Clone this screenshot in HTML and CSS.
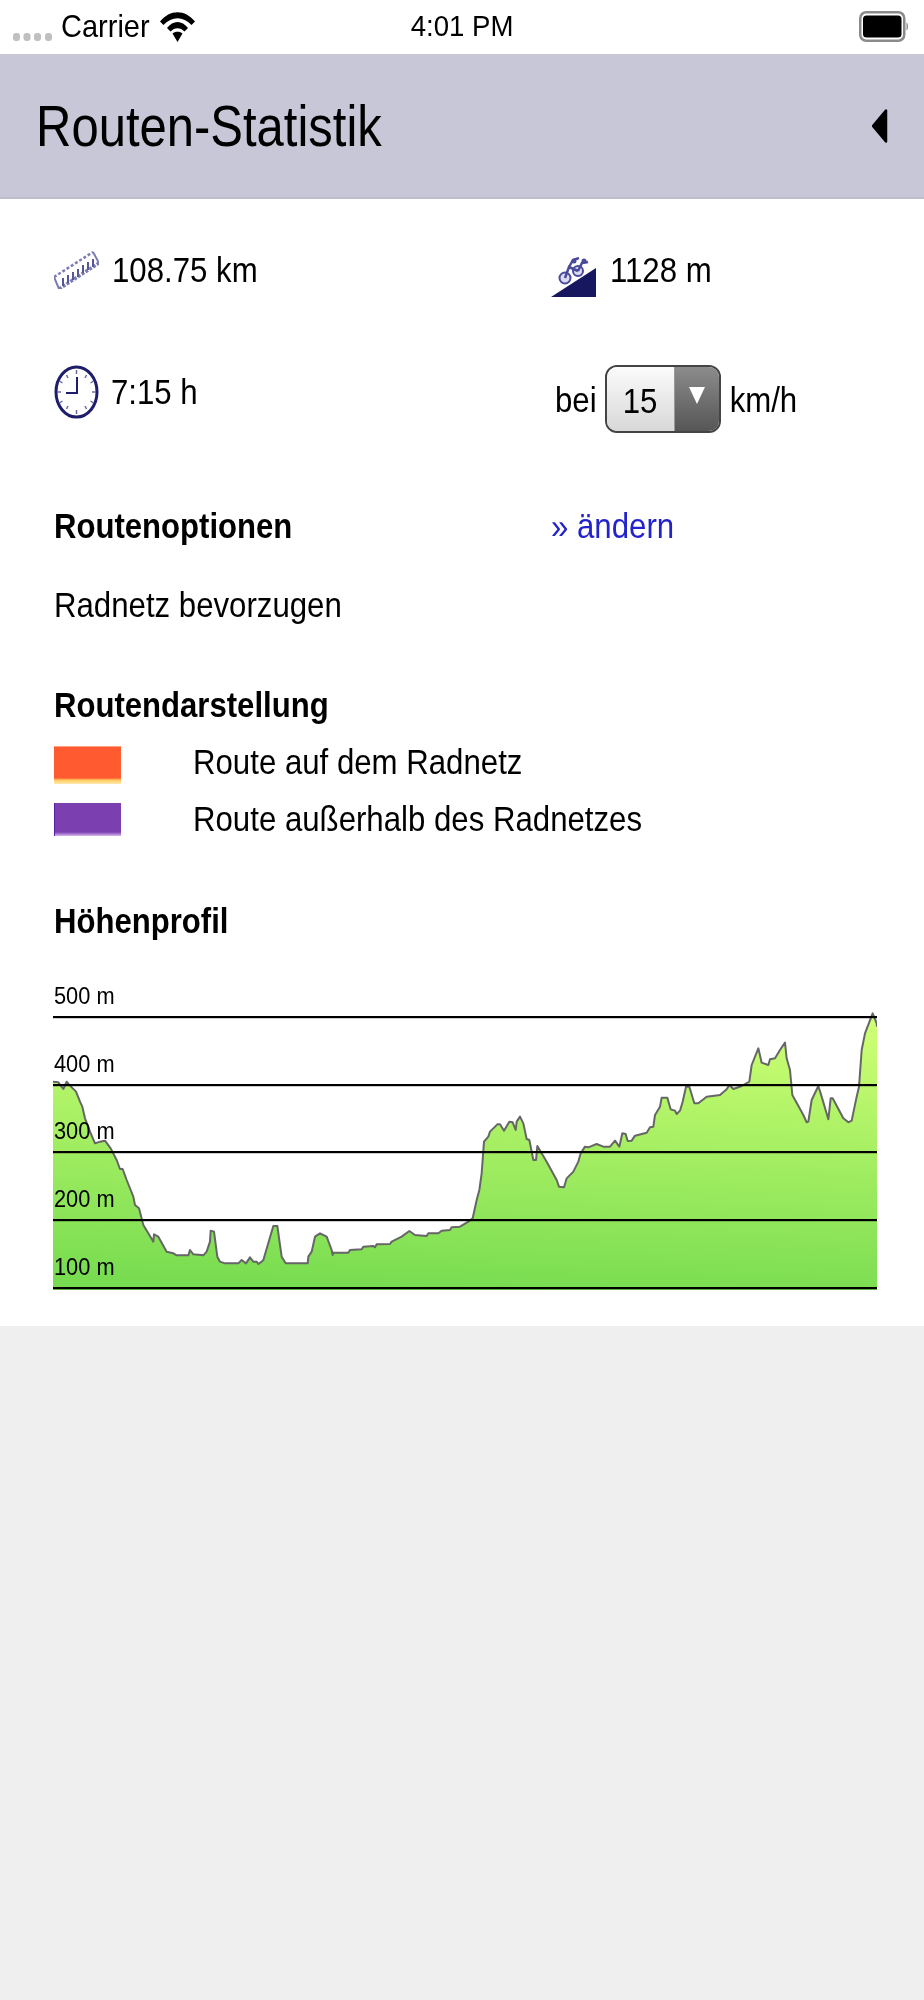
FILE: index.html
```html
<!DOCTYPE html>
<html lang="de">
<head>
<meta charset="utf-8">
<title>Routen-Statistik</title>
<link rel="stylesheet" href="styles.css">
</head>
<body>
<div class="status">
  <svg class="signal" viewBox="0 0 39 8"><rect x="0" y="0" width="7" height="8" rx="3"/><rect x="10.500" y="0" width="7" height="8" rx="3"/><rect x="21" y="0" width="7" height="8" rx="3"/><rect x="32" y="0" width="7" height="8" rx="3"/></svg>
  <span class="carrier t-status">Carrier</span>
  <svg class="wifi" viewBox="0 0 35 30"><path d="M0 9.500C10-3 25-3 35 9.500L31.500 13C23 4 12 4 3.500 13Z"/><path d="M7 16C13 8 22 8 28 16L24.500 19.500C20.500 15 14.500 15 10.500 19.500Z"/><path d="M12.500 21.500C15 19 20 19 22.500 21.500L17.500 30Z"/></svg>
  <span class="time t-status">4:01 PM</span>
  <svg class="battery" viewBox="0 0 50 31" preserveAspectRatio="none"><rect x="1.250" y="1.250" width="44" height="28.500" rx="6" class="batt-shell"/><rect x="4" y="4.500" width="38.500" height="22" rx="3.500"/><path d="M47.500 11.500C49.500 12.500 49.500 18.500 47.500 19.500Z" class="batt-nub"/></svg>
</div>
<header class="header">
  <h1 class="title">Routen-Statistik</h1>
  <svg class="back" viewBox="0 0 16 34"><path d="M14 1.500V32.500L1 17Z" class="back-shape"/></svg>
</header>
<main class="content">
  <section class="stats">
    <div class="stat">
      <svg class="icon ruler" viewBox="0 0 45 39"><path d="M0 27L39 2" class="ruler-top"/><path d="M0 27L5 39M39 2L45 13" class="ruler-side"/><path d="M5 39L45 13" class="ruler-bottom"/><path d="M9 36V28M14 33V25M19 30V22M24 27V19M29 23V15M34 20V12M39 17V9" class="ruler-ticks"/></svg>
      <span class="val">108.75 km</span>
    </div>
    <div class="stat">
      <svg class="icon climb" viewBox="0 0 45 40"><path d="M0 40L45 11V40Z" class="climb-hill"/><circle cx="14" cy="21" r="5.500" class="climb-wheel"/><circle cx="27" cy="14" r="5" class="climb-wheel"/><path d="M14 21L18 10 27 14M18 10L22 3 28 1M27 14L31 6 37 5" class="climb-frame"/><circle cx="23" cy="4" r="2.500" class="climb-head"/><circle cx="33" cy="4" r="2.500" class="climb-head"/></svg>
      <span class="val">1128 m</span>
    </div>
    <div class="stat">
      <svg class="icon clock" viewBox="0 0 45 54"><ellipse cx="22.500" cy="27" rx="20.500" ry="25" class="clock-face"/><path d="M22.500 5v4M22.500 45v4M3 27h4M38 27h4M12.500 10l1.500 3M32.500 10l-1.500 3M5.500 16l3 2M39.500 16l-3 2M5.500 38l3-2M39.500 38l-3-2M12.500 44l1.500-3M32.500 44l-1.500-3" class="clock-ticks"/><path d="M23 12V28H12" class="clock-hands"/></svg>
      <span class="val val-clock">7:15 h</span>
    </div>
    <div class="speed">
      <span class="val">bei</span>
      <div class="select">
        <span class="select-value"><span class="val">15</span></span>
        <span class="select-arrow"><svg viewBox="0 0 16 17"><path d="M0 0H16L8 17Z"/></svg></span>
      </div>
      <span class="val">km/h</span>
    </div>
  </section>
  <section class="options">
    <h2 class="heading">Routenoptionen</h2>
    <a class="link" href="#">» ändern</a>
  </section>
  <p class="option-value"><span class="val">Radnetz bevorzugen</span></p>
  <h2 class="heading heading-legend">Routendarstellung</h2>
  <ul class="legend">
    <li class="legend-row"><span class="swatch swatch-on"></span><span class="val">Route auf dem Radnetz</span></li>
    <li class="legend-row"><span class="swatch swatch-off"></span><span class="val">Route außerhalb des Radnetzes</span></li>
  </ul>
  <h2 class="heading heading-profile">Höhenprofil</h2>
  <div class="chart">
    <svg class="profile" viewBox="0 0 2472 855" preserveAspectRatio="none">
      <defs><linearGradient id="area" x1="0.55" y1="0" x2="0.45" y2="1"><stop offset="0" stop-color="#ceff74"/><stop offset="1" stop-color="#78dc50"/></linearGradient></defs>
      <path class="area" d="M0 215L16 217 31 237 41 215 51 227 69 245 81 275 88 290 96 325 111 365 126 400 141 395 156 392 173 415 191 450 201 477 209 477 221 510 241 560 246 585 258 595 271 645 286 670 301 695 303 673 316 680 341 725 361 730 371 736 406 736 411 720 421 733 451 736 461 725 471 695 473 662 483 665 493 740 501 755 516 760 556 760 566 750 579 760 591 742 601 755 611 755 616 762 626 755 631 750 661 648 673 648 681 705 686 740 698 760 764 760 766 740 776 725 786 680 801 670 821 680 836 720 839 735 841 728 886 728 891 720 926 718 931 710 961 708 966 712 971 703 1011 702 1016 695 1046 680 1069 663 1086 675 1121 678 1126 670 1156 670 1166 662 1191 660 1196 652 1221 650 1246 635 1259 625 1271 570 1279 540 1286 490 1293 395 1306 380 1311 365 1333 343 1341 343 1353 362 1369 335 1379 337 1388 360 1391 335 1401 320 1411 340 1421 387 1429 390 1441 450 1449 450 1453 408 1481 455 1511 510 1518 530 1533 532 1541 505 1561 485 1576 455 1583 430 1596 410 1606 412 1631 402 1651 410 1671 410 1686 392 1699 410 1708 370 1718 372 1724 393 1736 392 1746 377 1781 368 1791 352 1801 350 1806 315 1821 290 1826 263 1843 263 1853 298 1866 302 1871 312 1881 302 1889 275 1899 230 1909 230 1924 280 1936 280 1961 260 2001 255 2021 238 2029 225 2041 237 2066 228 2089 215 2096 165 2116 115 2126 158 2146 165 2151 148 2166 145 2181 120 2196 98 2201 145 2211 180 2218 255 2251 315 2261 337 2266 335 2276 270 2296 228 2306 260 2326 328 2333 265 2339 265 2371 325 2386 337 2396 332 2411 260 2418 230 2426 120 2436 70 2459 10 2471 40 2472 50V840H0Z"/>
      <path class="ridge" d="M0 215L16 217 31 237 41 215 51 227 69 245 81 275 88 290 96 325 111 365 126 400 141 395 156 392 173 415 191 450 201 477 209 477 221 510 241 560 246 585 258 595 271 645 286 670 301 695 303 673 316 680 341 725 361 730 371 736 406 736 411 720 421 733 451 736 461 725 471 695 473 662 483 665 493 740 501 755 516 760 556 760 566 750 579 760 591 742 601 755 611 755 616 762 626 755 631 750 661 648 673 648 681 705 686 740 698 760 764 760 766 740 776 725 786 680 801 670 821 680 836 720 839 735 841 728 886 728 891 720 926 718 931 710 961 708 966 712 971 703 1011 702 1016 695 1046 680 1069 663 1086 675 1121 678 1126 670 1156 670 1166 662 1191 660 1196 652 1221 650 1246 635 1259 625 1271 570 1279 540 1286 490 1293 395 1306 380 1311 365 1333 343 1341 343 1353 362 1369 335 1379 337 1388 360 1391 335 1401 320 1411 340 1421 387 1429 390 1441 450 1449 450 1453 408 1481 455 1511 510 1518 530 1533 532 1541 505 1561 485 1576 455 1583 430 1596 410 1606 412 1631 402 1651 410 1671 410 1686 392 1699 410 1708 370 1718 372 1724 393 1736 392 1746 377 1781 368 1791 352 1801 350 1806 315 1821 290 1826 263 1843 263 1853 298 1866 302 1871 312 1881 302 1889 275 1899 230 1909 230 1924 280 1936 280 1961 260 2001 255 2021 238 2029 225 2041 237 2066 228 2089 215 2096 165 2116 115 2126 158 2146 165 2151 148 2166 145 2181 120 2196 98 2201 145 2211 180 2218 255 2251 315 2261 337 2266 335 2276 270 2296 228 2306 260 2326 328 2333 265 2339 265 2371 325 2386 337 2396 332 2411 260 2418 230 2426 120 2436 70 2459 10 2471 40 2472 50"/>
    </svg>
    <div class="chart-row chart-row-first"><span class="chart-label">500 m</span></div>
    <div class="chart-row"><span class="chart-label">400 m</span></div>
    <div class="chart-row"><span class="chart-label">300 m</span></div>
    <div class="chart-row"><span class="chart-label">200 m</span></div>
    <div class="chart-row"><span class="chart-label">100 m</span></div>
  </div>
</main>
</body>
</html>
```

FILE: styles.css
```css
* { box-sizing: border-box; }
html, body { margin: 0; padding: 0; }
body {
  background: #efefef;
  color: #000;
  font-family: "Liberation Sans", Arial, sans-serif;
  width: 924px;
  min-height: 2000px;
}

/* status bar */
.status {
  height: 55px;
  background: #fff;
  border-bottom: 1px solid #c9c9d6;
  display: flex;
  align-items: flex-start;
}
.t-status {
  line-height: 30px;
  display: inline-block;
  transform: scaleY(1.06);
}
.signal { width: 39px; height: 8px; margin: 33px 0 0 13px; fill: #c0c0c0; flex: none; }
.carrier { font-size: 29px; margin: 11px 0 0 9px; }
.wifi { width: 35px; height: 30px; margin: 12px 0 0 10px; flex: none; fill: #000; }
.time { font-size: 27.600px; margin: 11px 0 0 216px; }
.battery { width: 50px; height: 31px; margin: 11px 0 0 346px; flex: none; fill: #000; }
.batt-shell { fill: #fff; stroke: #8a8a8a; stroke-width: 2.500; }
.batt-nub { fill: #8a8a8a; }

/* header */
.header {
  height: 144px;
  background: #c7c7d8;
  border-bottom: 2px solid #bdbdcc;
  display: flex;
  align-items: center;
  justify-content: space-between;
  padding: 0 36px;
}
.title {
  margin: 0;
  font-size: 49px;
  font-weight: 400;
  line-height: 60px;
  transform: scaleY(1.18);
}
.back { width: 16px; height: 34px; flex: none; }
.back-shape { fill: #000; stroke: #000; stroke-width: 2.500; stroke-linejoin: round; }

/* content */
.content {
  background: #fff;
  height: 1127px;
  padding: 0 47px 0 54px;
}
.val, .heading, .link {
  display: inline-block;
  font-size: 31.200px;
  line-height: 40px;
  transform: scaleY(1.14);
}
.val { padding-top: 2px; }
.stat .val, .legend-row .val { padding-top: 1px; }
.stats {
  display: grid;
  grid-template-columns: 497px 1fr;
  grid-template-rows: 47px 68px;
  row-gap: 68px;
  padding-top: 51px;
}
.stat { display: flex; align-items: flex-start; }
.icon { flex: none; filter: blur(0.4px); }
.ruler { width: 45px; height: 39px; margin-right: 13px; }
.ruler-top { fill: none; stroke: #7c7cb5; stroke-width: 2.500; stroke-dasharray: 3 2; }
.ruler-side { fill: none; stroke: #7c7cb5; stroke-width: 2; }
.ruler-bottom { fill: none; stroke: #7c7cb5; stroke-width: 3.500; stroke-dasharray: 3 1.500; }
.ruler-ticks { fill: none; stroke: #55559a; stroke-width: 2; }
.climb { width: 45px; height: 40px; margin: 7px 14px 0 0; }
.climb-hill { fill: #17175f; }
.climb-wheel { fill: #dcdcf0; stroke: #4a4a9a; stroke-width: 2; }
.climb-frame { fill: none; stroke: #4a4a9a; stroke-width: 2.500; }
.climb-head { fill: #4a4a9a; }
.clock { width: 45px; height: 54px; margin-right: 12px; }
.clock-face { fill: #fff; stroke: #1d1d6b; stroke-width: 3; }
.clock-ticks { fill: none; stroke: #6c6ca5; stroke-width: 1.500; }
.clock-hands { fill: none; stroke: #1d1d6b; stroke-width: 2; }
.val-clock { margin-top: 7px; }

.speed { display: flex; align-items: center; height: 68px; margin-left: 4px; }
.select {
  display: flex;
  width: 116px;
  height: 68px;
  margin: 0 9px 0 8px;
  border: 2px solid #444;
  border-radius: 12px;
  overflow: hidden;
}
.select-value {
  width: 67px;
  background: linear-gradient(#fbfbfb, #d8d8d8);
  display: flex;
  align-items: center;
  justify-content: center;
  padding-top: 2px;
}
.select-arrow {
  flex: 1;
  background: linear-gradient(#8c8c8c, #565656);
  border-left: 1px solid #999;
  display: flex;
  justify-content: center;
  padding-top: 20px;
}
.select-arrow svg { width: 16px; height: 17px; fill: #fff; }

.options {
  display: grid;
  grid-template-columns: 497px 1fr;
  margin-top: 74px;
}
.heading { margin: 0; font-weight: 700; font-size: 31.100px; display: block; }
.link { color: #2323cc; text-decoration: none; justify-self: start; }
.option-value { margin: 36px 0 0; line-height: 40px; }
.heading-legend { margin-top: 56px; }
.legend { list-style: none; margin: 20px 0 0; padding: 0; }
.legend-row { display: flex; align-items: flex-start; height: 38px; margin-bottom: 19px; }
.legend-row:last-child { height: 33px; margin-bottom: 0; }
.legend-row .val { line-height: 32px; }
.swatch { width: 67px; flex: none; margin-right: 72px; display: block; }
.swatch-on {
  height: 38px;
  background: linear-gradient(#ffc0a8 0, #ff5a30 4%, #ff5a30 84%, #ffd060 90%, #ffe8b0 100%);
}
.swatch-off {
  height: 33px;
  background: linear-gradient(#7b3fb0 0, #7b3fb0 88%, #d6b8ec 100%);
  box-shadow: inset 1px 0 0 #5a1fa0;
}
.heading-profile { margin-top: 66px; }

/* elevation chart */
.chart { position: relative; width: 824px; margin: 38px 0 0 -1px; }
.profile { position: absolute; left: 0; top: 30px; width: 824px; height: 285px; }
.area { fill: url(#area); }
.ridge { fill: none; stroke: #666; stroke-width: 6; stroke-linejoin: round; }
.chart-row {
  position: relative;
  height: 67.900px;
  border-bottom: 2px solid #000;
  box-shadow: 0 1px 0 rgba(0, 0, 0, 0.2);
  display: flex;
  align-items: flex-end;
  padding-bottom: 8px;
}
.chart-row-first { height: 37.700px; }
.chart-label {
  font-size: 21.800px;
  line-height: 24px;
  display: inline-block;
  transform: scaleY(1.11);
  padding-left: 1px;
}
```
